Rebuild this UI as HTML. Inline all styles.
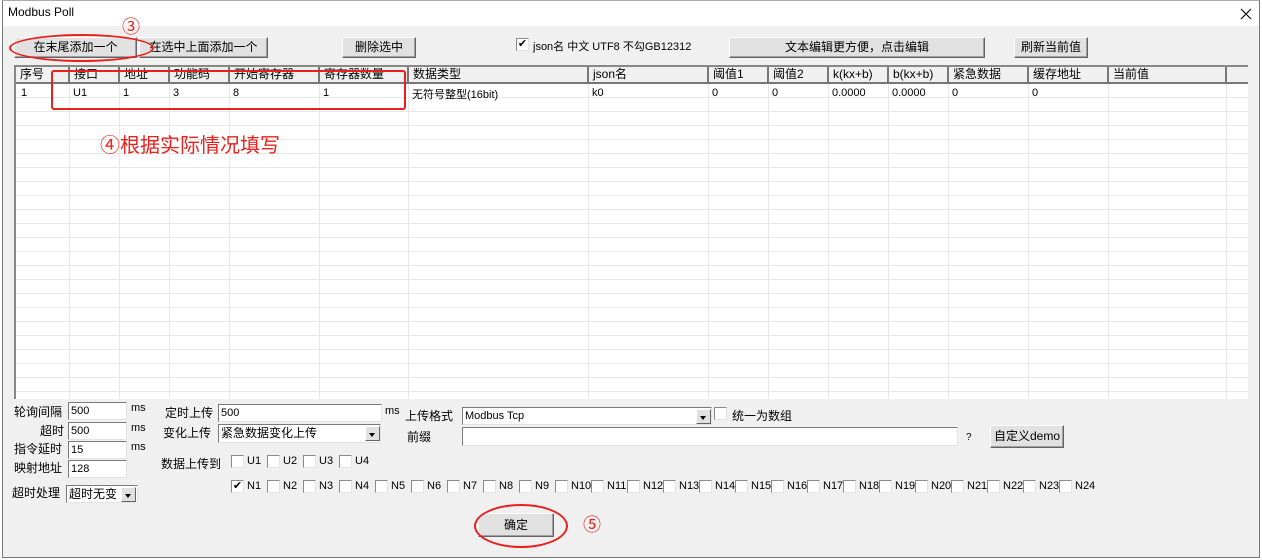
<!DOCTYPE html>
<html><head><meta charset="utf-8"><style>
*{box-sizing:border-box;margin:0;padding:0}
body{width:1262px;height:560px;background:#fff;position:relative;overflow:hidden;font-family:"Liberation Sans","Noto Sans CJK SC",sans-serif;font-size:12px;color:#000}
.a{position:absolute;white-space:nowrap}
.win{position:absolute;left:2px;top:0;width:1258px;height:558px;border:1px solid #777;border-top:1px solid #aaa;background:#f0f0f0}
.title{position:absolute;left:0;top:0;width:100%;height:25px;background:#fff}
.btn{position:absolute;background:#e1e1e1;border:1px solid #fff;border-right-color:#646464;border-bottom-color:#646464;box-shadow:inset -1px -1px 0 #a0a0a0;text-align:center;font-size:12px;line-height:19px}
.in{position:absolute;background:#fff;border:1px solid #7a7a7a;border-right-color:#e3e3e3;border-bottom-color:#e3e3e3;font-size:11px;padding-left:2px;line-height:17px}
.cb{position:absolute;width:13px;height:13px;background:#fff;border:1px solid #8a8a8a;border-right-color:#e3e3e3;border-bottom-color:#e3e3e3;font-size:11px;line-height:10px;text-align:center}
.lbl{position:absolute;font-size:11px;white-space:nowrap}
.dd{position:absolute;width:15px;height:15px;background:#e1e1e1;border:1px solid #fff;border-right-color:#646464;border-bottom-color:#646464}
.dd:after{content:"";position:absolute;left:3px;top:6px;border:3px solid transparent;border-top:4px solid #000}
.grid{position:absolute;left:14px;top:65px;width:1234px;height:334px;background:#fff;border-left:2px solid #888;border-top:2px solid #888;
background-image:repeating-linear-gradient(#fff 0 13px,#e8e8e8 13px 14px);background-position:0 17px}
.hd{position:absolute;top:0;height:17px;background:#f0f0f0;border-right:2px solid #777;border-bottom:2px solid #777;font-size:12px;line-height:14px;padding-left:4px}
.vl{position:absolute;top:17px;bottom:0;width:1px;background:#e8e8e8}
.cell{position:absolute;top:20px;font-size:11px}
.red{position:absolute;border:2px solid #e8211c}
</style></head><body>
<div class="win">
<div class="title"></div>
<div class="a" style="left:5px;top:4px;font-size:12px">Modbus Poll</div>
<svg class="a" style="left:1237px;top:7px" width="12" height="12"><path d="M1 1L11 11M11 1L1 11" stroke="#000" stroke-width="1.1"/></svg>
</div>

<div class="btn" style="left:14px;top:37px;width:123px;height:21px">在末尾添加一个</div>
<div class="btn" style="left:139px;top:37px;width:129px;height:21px">在选中上面添加一个</div>
<div class="btn" style="left:342px;top:37px;width:74px;height:21px">删除选中</div>
<div class="cb" style="left:516px;top:38px">✔</div>
<div class="lbl" style="left:533px;top:38px">json名 中文 UTF8 不勾GB12312</div>
<div class="btn" style="left:729px;top:37px;width:256px;height:21px">文本编辑更方便，点击编辑</div>
<div class="btn" style="left:1014px;top:37px;width:74px;height:21px">刷新当前值</div>

<div class="grid">
<div class="hd" style="left:0;width:54px">序号</div>
<div class="hd" style="left:54px;width:50px">接口</div>
<div class="hd" style="left:104px;width:50px">地址</div>
<div class="hd" style="left:154px;width:60px">功能码</div>
<div class="hd" style="left:214px;width:90px">开始寄存器</div>
<div class="hd" style="left:304px;width:89px">寄存器数量</div>
<div class="hd" style="left:393px;width:180px">数据类型</div>
<div class="hd" style="left:573px;width:120px">json名</div>
<div class="hd" style="left:693px;width:60px">阈值1</div>
<div class="hd" style="left:753px;width:60px">阈值2</div>
<div class="hd" style="left:813px;width:60px">k(kx+b)</div>
<div class="hd" style="left:873px;width:60px">b(kx+b)</div>
<div class="hd" style="left:933px;width:80px">紧急数据</div>
<div class="hd" style="left:1013px;width:80px">缓存地址</div>
<div class="hd" style="left:1093px;width:118px">当前值</div>
<div class="hd" style="left:1211px;width:21px;border-right:none"></div>
<div class="vl" style="left:53px"></div><div class="vl" style="left:103px"></div><div class="vl" style="left:153px"></div><div class="vl" style="left:213px"></div><div class="vl" style="left:303px"></div><div class="vl" style="left:392px"></div><div class="vl" style="left:572px"></div><div class="vl" style="left:692px"></div><div class="vl" style="left:752px"></div><div class="vl" style="left:812px"></div><div class="vl" style="left:872px"></div><div class="vl" style="left:932px"></div><div class="vl" style="left:1012px"></div><div class="vl" style="left:1092px"></div><div class="vl" style="left:1210px"></div>
<div class="cell" style="left:5px">1</div>
<div class="cell" style="left:57px">U1</div>
<div class="cell" style="left:107px">1</div>
<div class="cell" style="left:157px">3</div>
<div class="cell" style="left:217px">8</div>
<div class="cell" style="left:307px">1</div>
<div class="cell" style="left:396px;top:19px">无符号整型(16bit)</div>
<div class="cell" style="left:576px">k0</div>
<div class="cell" style="left:696px">0</div>
<div class="cell" style="left:756px">0</div>
<div class="cell" style="left:816px">0.0000</div>
<div class="cell" style="left:876px">0.0000</div>
<div class="cell" style="left:936px">0</div>
<div class="cell" style="left:1016px">0</div>
</div>

<div class="red" style="left:51px;top:70px;width:355px;height:40px;border-radius:3px"></div>
<div class="red" style="left:9px;top:34px;width:145px;height:28px;border-radius:50%"></div>
<div class="a" style="left:122px;top:13px;color:#e8211c;font-size:18px">③</div>
<div class="a" style="left:100px;top:129px;color:#e8211c;font-size:20px">④根据实际情况填写</div>

<div class="lbl" style="left:14px;top:403px;font-size:12px">轮询间隔</div>
<div class="in" style="left:68px;top:402px;width:59px;height:18px">500</div><div class="lbl" style="left:131px;top:402px">ms</div>
<div class="lbl" style="left:40px;top:422px;font-size:12px">超时</div>
<div class="in" style="left:68px;top:422px;width:59px;height:18px">500</div><div class="lbl" style="left:131px;top:422px">ms</div>
<div class="lbl" style="left:14px;top:440px;font-size:12px">指令延时</div>
<div class="in" style="left:68px;top:441px;width:59px;height:18px">15</div><div class="lbl" style="left:131px;top:441px">ms</div>
<div class="lbl" style="left:14px;top:459px;font-size:12px">映射地址</div>
<div class="in" style="left:68px;top:460px;width:59px;height:18px">128</div>
<div class="lbl" style="left:12px;top:484px;font-size:12px">超时处理</div>
<div class="in" style="left:66px;top:485px;width:72px;height:18px;font-size:12px">超时无变</div><div class="dd" style="left:121px;top:487px"></div>

<div class="lbl" style="left:165px;top:404px;font-size:12px">定时上传</div>
<div class="in" style="left:218px;top:404px;width:164px;height:18px">500</div><div class="lbl" style="left:385px;top:405px">ms</div>
<div class="lbl" style="left:163px;top:424px;font-size:12px">变化上传</div>
<div class="in" style="left:218px;top:424px;width:163px;height:19px;font-size:12px">紧急数据变化上传</div><div class="dd" style="left:365px;top:426px"></div>
<div class="lbl" style="left:161px;top:455px;font-size:12px">数据上传到</div>
<div class="cb" style="left:231px;top:455px"></div><div class="lbl" style="left:247px;top:455px">U1</div>
<div class="cb" style="left:267px;top:455px"></div><div class="lbl" style="left:283px;top:455px">U2</div>
<div class="cb" style="left:303px;top:455px"></div><div class="lbl" style="left:319px;top:455px">U3</div>
<div class="cb" style="left:339px;top:455px"></div><div class="lbl" style="left:355px;top:455px">U4</div>

<div class="lbl" style="left:405px;top:407px;font-size:12px">上传格式</div>
<div class="in" style="left:462px;top:407px;width:250px;height:18px">Modbus Tcp</div><div class="dd" style="left:696px;top:409px"></div>
<div class="cb" style="left:714px;top:407px"></div><div class="lbl" style="left:732px;top:407px;font-size:12px">统一为数组</div>
<div class="lbl" style="left:407px;top:428px;font-size:12px">前缀</div>
<div class="in" style="left:462px;top:427px;width:496px;height:19px"></div>
<div class="lbl" style="left:966px;top:432px;font-size:10px">?</div>
<div class="btn" style="left:990px;top:425px;width:74px;height:23px;line-height:21px">自定义demo</div>

<div id="nrow"></div>

<div class="btn" style="left:478px;top:513px;width:76px;height:24px;line-height:22px">确定</div>
<div class="red" style="left:474px;top:504px;width:94px;height:44px;border-radius:50%"></div>
<div class="a" style="left:583px;top:511px;color:#e8211c;font-size:18px">⑤</div>

<script>
var h='';for(var k=1;k<=24;k++){var x=231+36*(k-1);h+='<div class="cb" style="left:'+x+'px;top:480px">'+(k==1?'✔':'')+'</div><div class="lbl" style="left:'+(x+16)+'px;top:480px">N'+k+'</div>';}
document.getElementById('nrow').outerHTML=h;
</script>
</body></html>
